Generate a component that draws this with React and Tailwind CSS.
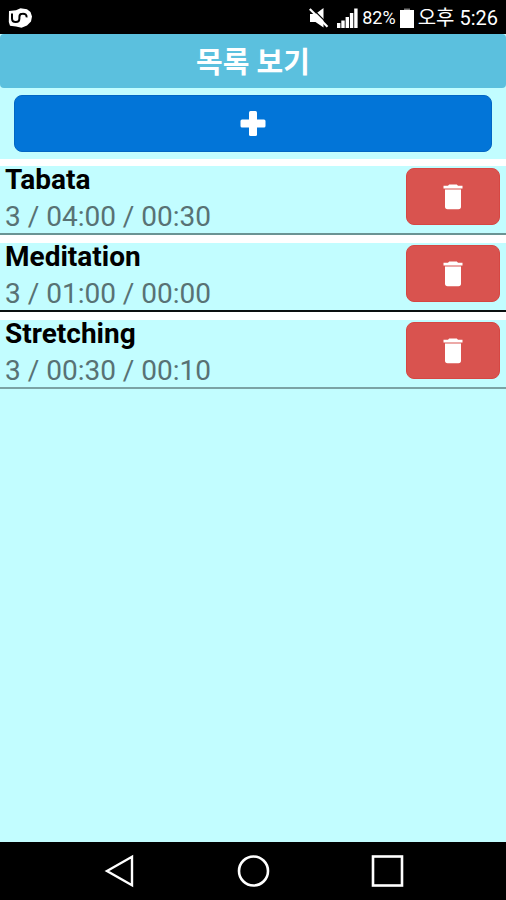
import React, { useState } from 'react';

const initialTimers = [
    { id: 1, title: 'Tabata', summary: '3 / 04:00 / 00:30', border: 'border-[#6b9494]' },
    { id: 2, title: 'Meditation', summary: '3 / 01:00 / 00:00', border: 'border-[#0a1010]' },
    { id: 3, title: 'Stretching', summary: '3 / 00:30 / 00:10', border: 'border-[#7ba3a5]' },
];

const CarrierIcon = () => (
    <svg viewBox="0 0 24 20" className="w-6 h-5" aria-hidden="true">
        <path d="M1 3 L8 2.2 L12.5 0.3 L19 1.2 L22.5 4 L24 8.5 L23 13.5 L19 17.5 L13.5 19.8 L8 18.6 L2 17.8 L0.8 14 Z" fill="#fff" />
        <path d="M4 5.5 V10.5 Q4 14 7.8 14 Q11.4 14 11.4 10.5 V9 Q11.4 5.8 14.5 5.8 Q18.8 5.6 18.6 9.4" fill="none" stroke="#000" strokeWidth="2" />
    </svg>
);

const MuteIcon = () => (
    <svg viewBox="0 0 20 20" className="w-5 h-5" aria-hidden="true">
        <path d="M1 6 H6.5 L14.5 0 V19.5 L6.5 14 H1 Z" fill="#fff" />
        <path d="M2.6 -0.2 L20 17.2" stroke="#000" strokeWidth="1.2" />
        <path d="M0.8 1 L18.5 18.7" stroke="#fff" strokeWidth="2.2" />
    </svg>
);

const SignalIcon = () => (
    <svg viewBox="0 0 21 20" className="w-[21px] h-5" fill="#fff" aria-hidden="true">
        <rect x="0" y="15" width="3.4" height="5" />
        <rect x="4.3" y="12.5" width="3.4" height="7.5" />
        <rect x="8.6" y="9" width="3.4" height="11" />
        <rect x="12.9" y="5" width="3.4" height="15" />
        <rect x="17.2" y="0.5" width="3.4" height="19.5" />
    </svg>
);

const BatteryIcon = () => (
    <svg viewBox="0 0 14 20" className="w-[14px] h-5" aria-hidden="true">
        <rect x="4" y="0.5" width="6" height="2" fill="#777" />
        <rect x="0" y="2" width="14" height="18" fill="#fff" />
    </svg>
);

const PlusIcon = () => (
    <svg viewBox="0 0 26 26" className="w-[26px] h-[26px]" fill="#fff" aria-hidden="true">
        <rect x="9" y="0" width="8" height="25" rx="1.5" />
        <rect x="0.5" y="8.5" width="25" height="8" rx="1.5" />
    </svg>
);

const TrashIcon = () => (
    <svg viewBox="0 0 20 26" className="w-5 h-[26px]" fill="#fff" aria-hidden="true">
        <path d="M0.5 1.8 H5 L6.2 0.6 H13.8 L15 1.8 H19.5 V4.6 H0.5 Z" />
        <path d="M2 5.4 H18 V22.5 Q18 25.2 15.5 25.2 H4.5 Q2 25.2 2 22.5 Z" />
    </svg>
);

const StatusBar = () => (
    <div className="h-[34px] shrink-0 pt-px bg-black text-white flex items-center justify-between px-2 text-lg">
        <CarrierIcon />
        <div className="flex items-center gap-1">
            <MuteIcon />
            <div className="flex items-center gap-1 pl-1">
                <SignalIcon />
                <span>82%</span>
            </div>
            <BatteryIcon />
            <span className="text-xl">오후 5:26</span>
        </div>
    </div>
);

const TimerRow = ({ timer, onDelete }) => (
    <li className={`flex items-start justify-between h-[69px] bg-[#c2fdff] border-b-2 pl-[5px] pr-[6px] ${timer.border}`}>
        <div>
            <h2 className="text-[28px] leading-[28px] font-bold text-black">{timer.title}</h2>
            <p className="pt-1 text-[28px] leading-[38px] text-[#587274]">{timer.summary}</p>
        </div>
        <button
            type="button"
            aria-label={`Delete ${timer.title}`}
            onClick={() => onDelete(timer.id)}
            className="mt-[2px] w-[94px] h-[57px] rounded-lg bg-[#d9534f] border border-[#d64743] flex items-center justify-center"
        >
            <TrashIcon />
        </button>
    </li>
);

const NavigationBar = () => (
    <nav className="h-[58px] shrink-0 bg-black flex items-center justify-center gap-[100px]">
        <button type="button" aria-label="Back">
            <svg viewBox="0 0 34 34" className="w-[34px] h-[34px]" fill="none" stroke="#fff" strokeWidth="2.4">
                <path d="M5 17 L30 2.8 V31.2 Z" />
            </svg>
        </button>
        <button type="button" aria-label="Home">
            <svg viewBox="0 0 34 34" className="w-[34px] h-[34px]" fill="none" stroke="#fff" strokeWidth="2.6">
                <circle cx="17.5" cy="17" r="14.5" />
            </svg>
        </button>
        <button type="button" aria-label="Recent apps">
            <svg viewBox="0 0 34 34" className="w-[34px] h-[34px]" fill="none" stroke="#fff" strokeWidth="2.6">
                <rect x="3" y="2.5" width="29" height="29" />
            </svg>
        </button>
    </nav>
);

const App = () => {
    const [timers, setTimers] = useState(initialTimers);

    const handleDelete = (id) => {
        setTimers((prev) => prev.filter((timer) => timer.id !== id));
    };

    return (
        <div className="min-h-screen flex flex-col bg-[#c2fdff] font-['Roboto','Noto_Sans_CJK_KR',sans-serif]">
            <StatusBar />
            <header className="h-[54px] shrink-0 pt-1 rounded bg-[#5bc0de] flex items-center justify-center">
                <h1 className="text-[29px] leading-[40px] font-bold text-white">목록 보기</h1>
            </header>
            <main className="grow">
                <div className="py-[7px] px-[14px]">
                    <button
                        type="button"
                        aria-label="Add"
                        className="w-full h-[57px] rounded-lg bg-[#0275d8] border border-[#0267c4] flex items-center justify-center"
                    >
                        <PlusIcon />
                    </button>
                </div>
                <ul className="flex flex-col gap-2 pt-[7px] bg-white">
                    {timers.map((timer) => (
                        <TimerRow key={timer.id} timer={timer} onDelete={handleDelete} />
                    ))}
                </ul>
            </main>
            <NavigationBar />
        </div>
    );
};

export default App;
